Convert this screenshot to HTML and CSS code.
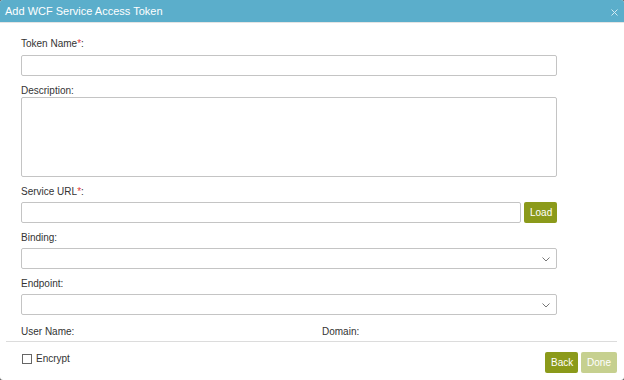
FILE: index.html
```html
<!DOCTYPE html>
<html lang="en">
<head>
    <meta charset="UTF-8">
    <meta name="viewport" content="width=device-width, initial-scale=1.0">
    <title>Add WCF Service Access Token</title>
    <link rel="stylesheet" href="styles.css">
</head>
<body>
    <div class="dialog">
        <div class="dialog-header">
            <span class="dialog-title">Add WCF Service Access Token</span>
            <button type="button" class="close-btn" aria-label="Close">
                <svg width="7" height="7" viewBox="0 0 7 7"><path d="M0.5 0.5L6.5 6.5M6.5 0.5L0.5 6.5" stroke="#d3eaf2" stroke-width="1" fill="none"/></svg>
            </button>
        </div>
        <form class="dialog-body" id="token-form">
            <div class="field">
                <label for="token-name">Token Name<span class="req">*</span>:</label>
                <input type="text" id="token-name" class="text-input">
            </div>
            <div class="field field-desc">
                <label for="description">Description:</label>
                <textarea id="description" class="text-area"></textarea>
            </div>
            <div class="field">
                <label for="service-url">Service URL<span class="req">*</span>:</label>
                <div class="url-row">
                    <input type="text" id="service-url" class="text-input">
                    <button type="button" class="btn">Load</button>
                </div>
            </div>
            <div class="field">
                <label for="binding">Binding:</label>
                <div class="select-wrap">
                    <select id="binding" class="select"></select>
                    <svg class="chevron" width="8" height="5" viewBox="0 0 8 5"><path d="M0.5 0.5L4 4L7.5 0.5" stroke="#777" stroke-width="1" fill="none"/></svg>
                </div>
            </div>
            <div class="field field-endpoint">
                <label for="endpoint">Endpoint:</label>
                <div class="select-wrap">
                    <select id="endpoint" class="select"></select>
                    <svg class="chevron" width="8" height="5" viewBox="0 0 8 5"><path d="M0.5 0.5L4 4L7.5 0.5" stroke="#777" stroke-width="1" fill="none"/></svg>
                </div>
            </div>
            <div class="user-row">
                <label>User Name:</label>
                <label>Domain:</label>
            </div>
        </form>
        <div class="dialog-footer">
            <label class="check-label">
                <input type="checkbox" class="check">
                Encrypt
            </label>
            <div class="actions">
                <button type="button" class="btn">Back</button>
                <button type="button" class="btn btn-disabled">Done</button>
            </div>
        </div>
    </div>
</body>
</html>
```

FILE: styles.css
```css
html {
    background-color: #5f5f5f;
}
body {
    font-family: "Liberation Sans", Arial, sans-serif;
    margin: 0;
    padding: 0;
}
.dialog {
    width: 624px;
    height: 380px;
    background-color: #fff;
    border-radius: 3px;
    overflow: hidden;
    display: flex;
    flex-direction: column;
}
.dialog-header {
    height: 22px;
    background-color: #5baecb;
    border-bottom: 1px solid #e4e4e4;
    display: flex;
    align-items: center;
    padding: 0 6px 0 5px;
}
.dialog-title {
    color: #fff;
    font-size: 11px;
    line-height: 22px;
    flex: 1;
}
.close-btn {
    border: none;
    background: none;
    padding: 0;
    width: 7px;
    height: 7px;
    display: flex;
    margin-top: 2px;
}
.dialog-body {
    padding: 14px 67px 0 21px;
}
label {
    display: block;
    font-size: 10px;
    line-height: 13px;
    color: #333;
}
.req {
    color: #e03a3a;
}
.field {
    margin-bottom: 8px;
}
.field label {
    margin-bottom: 4px;
}
.field:first-child label {
    margin-bottom: 5px;
}
.field-desc label {
    margin-bottom: 0;
}
.field-endpoint {
    margin-top: 1px;
    margin-bottom: 10px;
}
.text-input,
.text-area,
.select {
    display: block;
    width: 100%;
    box-sizing: border-box;
    border: 1px solid #c4c4c4;
    border-radius: 2px;
    background-color: #fff;
    margin: 0;
    font-family: inherit;
    font-size: 10px;
}
.text-input,
.select {
    height: 21px;
}
.text-area {
    height: 80px;
    resize: none;
}
.select {
    appearance: none;
    -webkit-appearance: none;
}
.select-wrap {
    position: relative;
}
.chevron {
    position: absolute;
    right: 7px;
    top: 9px;
}
.url-row {
    display: flex;
    gap: 3px;
}
.url-row .text-input {
    flex: 1;
}
.url-row .btn {
    width: 33px;
}
.btn {
    height: 21px;
    padding: 0 6px;
    border: none;
    border-radius: 2px;
    background-color: #8b9a1a;
    color: #fff;
    font-family: inherit;
    font-size: 10px;
}
.btn-disabled {
    background-color: #c6d08f;
}
.user-row {
    display: grid;
    grid-template-columns: 301px 1fr;
    margin-bottom: 3px;
}
.dialog-footer {
    margin: 0 7px 0 6px;
    border-top: 1px solid #dcdcdc;
    padding: 10px 0 0 16px;
    display: flex;
    justify-content: space-between;
    align-items: flex-start;
}
.check-label {
    display: flex;
    align-items: center;
    gap: 4px;
    margin-top: 1px;
    line-height: 12px;
}
.check {
    appearance: none;
    -webkit-appearance: none;
    width: 10px;
    height: 10px;
    margin: 0;
    border: 1px solid #666;
    background-color: #fff;
}
.actions {
    display: flex;
    gap: 3px;
}
.actions .btn:first-child {
    width: 33px;
}
.actions .btn-disabled {
    width: 36px;
}
```
